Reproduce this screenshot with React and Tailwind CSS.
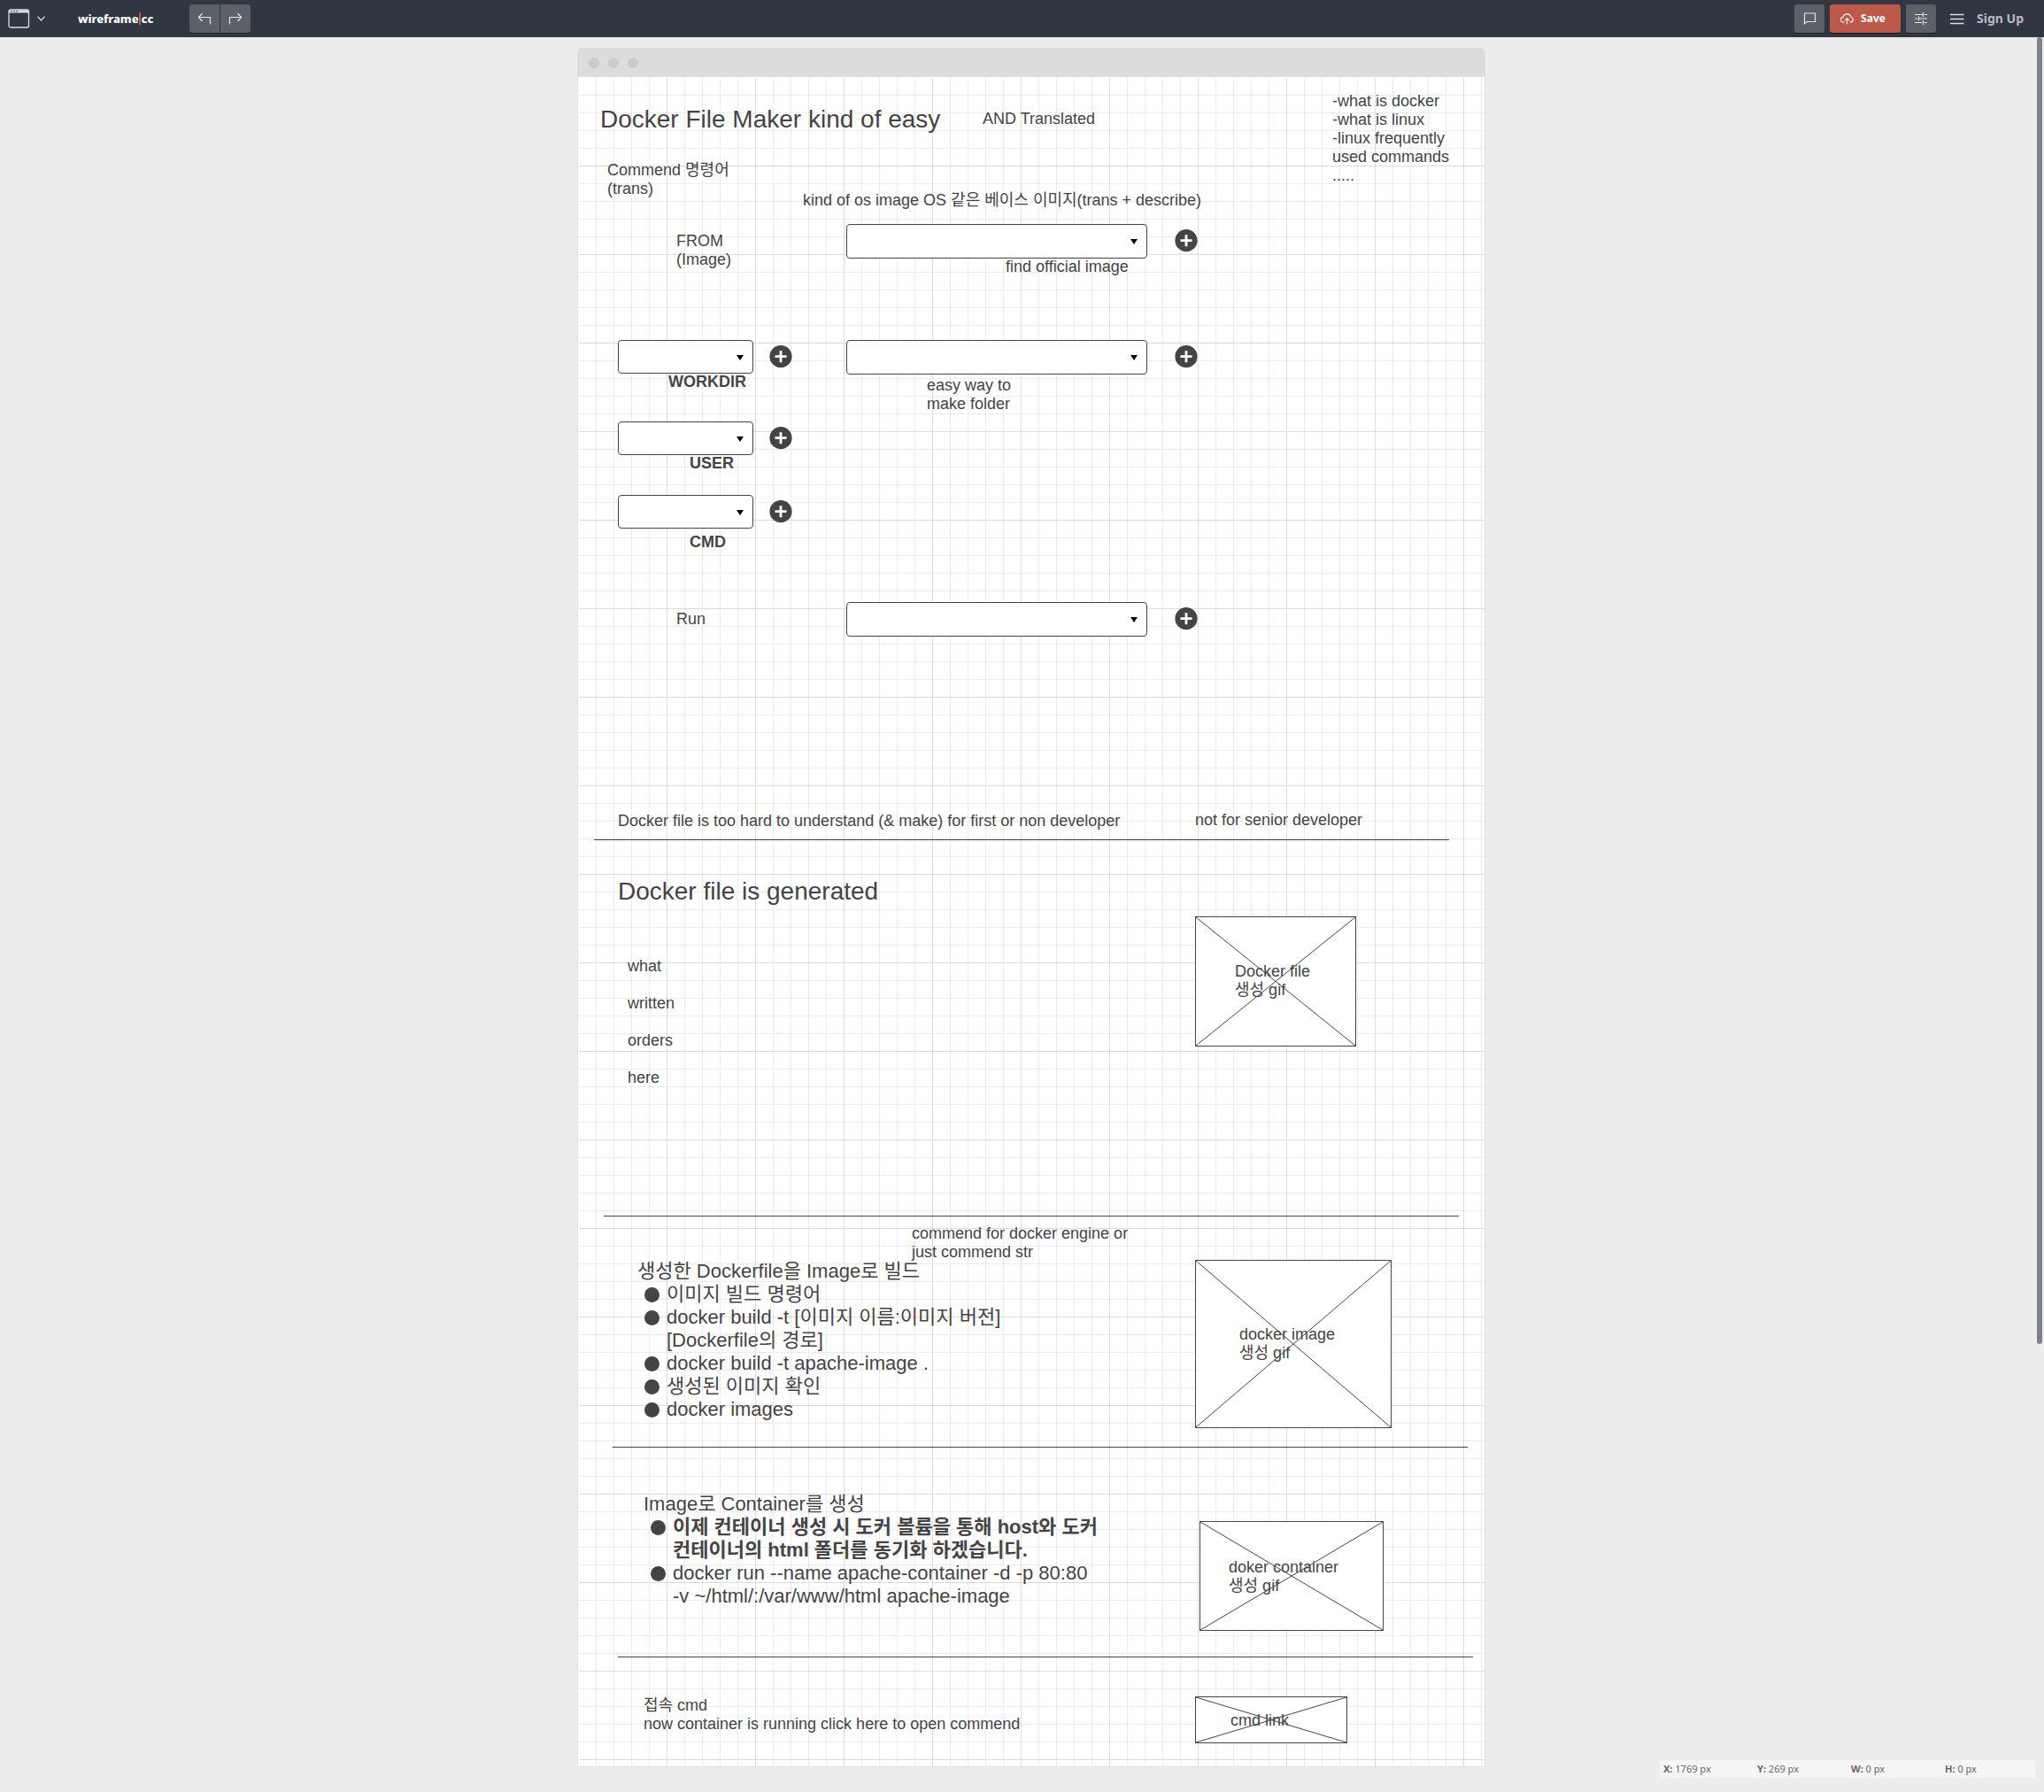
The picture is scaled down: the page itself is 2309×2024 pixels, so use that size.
import React from "react";

const FONT = "font-['Liberation_Sans','Noto_Sans_CJK_KR',sans-serif]";

const notes = [
  { at: "left-[458px] top-[37px]", lines: ["AND Translated"] },
  { at: "left-[34px] top-[95px]", lines: ["Commend 명령어", "(trans)"] },
  { at: "left-[255px] top-[129px]", lines: ["kind of os image OS 같은 베이스 이미지(trans + describe)"] },
  { at: "left-[853px] top-[17px]", lines: ["-what is docker", "-what is linux", "-linux frequently", "used commands", "....."] },
  { at: "left-[112px] top-[175px]", lines: ["FROM", "(Image)"] },
  { at: "left-[484px] top-[204px]", lines: ["find official image"] },
  { at: "left-[103px] top-[334px] font-bold", lines: ["WORKDIR"] },
  { at: "left-[395px] top-[338px]", lines: ["easy way to", "make folder"] },
  { at: "left-[127px] top-[426px] font-bold", lines: ["USER"] },
  { at: "left-[127px] top-[515px] font-bold", lines: ["CMD"] },
  { at: "left-[112px] top-[602px]", lines: ["Run"] },
  { at: "left-[46px] top-[830px]", lines: ["Docker file is too hard to understand (& make) for first or non developer"] },
  { at: "left-[698px] top-[829px]", lines: ["not for senior developer"] },
  { at: "left-[57px] top-[994px]", lines: ["what", "\u00a0", "written", "\u00a0", "orders", "\u00a0", "here"] },
  { at: "left-[378px] top-[1296px]", lines: ["commend for docker engine or", "just commend str"] },
  { at: "left-[75px] top-[1829px]", lines: ["접속 cmd", "now container is running click here to open commend"] },
];

const pictureNotes = [
  { at: "left-[743px] top-[1000px]", lines: ["Docker file", "생성 gif"] },
  { at: "left-[748px] top-[1410px]", lines: ["docker image", "생성 gif"] },
  { at: "left-[736px] top-[1673px]", lines: ["doker container", "생성 gif"] },
  { at: "left-[738px] top-[1846px]", lines: ["cmd link"] },
];

const titles = [
  { at: "left-[26px] top-[32px]", text: "Docker File Maker kind of easy" },
  { at: "left-[46px] top-[904px]", text: "Docker file is generated" },
];

const selects = [
  { at: "left-[304px] top-[166px] w-[340px] h-[39px]", label: "Base image" },
  { at: "left-[46px] top-[297px] w-[153px] h-[38px]", label: "WORKDIR" },
  { at: "left-[304px] top-[297px] w-[340px] h-[39px]", label: "WORKDIR folder" },
  { at: "left-[46px] top-[389px] w-[153px] h-[38px]", label: "USER" },
  { at: "left-[46px] top-[472px] w-[153px] h-[38px]", label: "CMD" },
  { at: "left-[304px] top-[593px] w-[340px] h-[39px]", label: "Run" },
];

const pluses = [
  { at: "left-[675px] top-[172px]", label: "Add image" },
  { at: "left-[217px] top-[303px]", label: "Add WORKDIR" },
  { at: "left-[675px] top-[303px]", label: "Add folder" },
  { at: "left-[217px] top-[395px]", label: "Add USER" },
  { at: "left-[217px] top-[478px]", label: "Add CMD" },
  { at: "left-[675px] top-[599px]", label: "Add run step" },
];

const rules = [
  "left-[19px] top-[861px]",
  "left-[30px] top-[1286px]",
  "left-[40px] top-[1547px]",
  "left-[46px] top-[1784px]",
];

const pictures = [
  "left-[698px] top-[948px] w-[182px] h-[147px]",
  "left-[698px] top-[1336px] w-[222px] h-[190px]",
  "left-[703px] top-[1631px] w-[208px] h-[124px]",
  "left-[698px] top-[1829px] w-[172px] h-[53px]",
];

const lists = [
  {
    at: "left-[68px] top-[1336px]",
    heading: "생성한 Dockerfile을 Image로 빌드",
    items: [
      { lines: ["이미지 빌드 명령어"] },
      { lines: ["docker build -t [이미지 이름:이미지 버전]", "[Dockerfile의 경로]"] },
      { lines: ["docker build -t apache-image ."] },
      { lines: ["생성된 이미지 확인"] },
      { lines: ["docker images"] },
    ],
  },
  {
    at: "left-[75px] top-[1599px]",
    heading: "Image로 Container를 생성",
    items: [
      { bold: true, lines: ["이제 컨테이너 생성 시 도커 볼륨을 통해 host와 도커", "컨테이너의 html 폴더를 동기화 하겠습니다."] },
      { lines: ["docker run --name apache-container -d -p 80:80", "-v ~/html/:/var/www/html apache-image"] },
    ],
  },
];

function Note({ at, lines }) {
  return (
    <p className={`absolute whitespace-nowrap text-[18px] leading-[21px] ${at}`}>
      {lines.map((line, i) => (
        <span key={i} className="block h-[21px]">{line}</span>
      ))}
    </p>
  );
}

function Dropdown({ at, label }) {
  return (
    <div className={`absolute ${at}`}>
      <select
        aria-label={label}
        className="block h-full w-full appearance-none rounded-[4px] border border-[#444] bg-white px-3 text-[18px]"
      />
      <svg className="pointer-events-none absolute right-[11px] top-[17px] h-[6px] w-[8px]" viewBox="0 0 8 6" aria-hidden="true">
        <path d="M0 0h8L4 6z" fill="#000" />
      </svg>
    </div>
  );
}

function Plus({ at, label }) {
  return (
    <button type="button" aria-label={label} className={`absolute h-[26px] w-[26px] ${at}`}>
      <svg viewBox="0 0 26 26" className="block h-full w-full">
        <circle cx="13" cy="12.7" r="12.6" fill="#444" />
        <path d="M13 6.2v13M6.5 12.7h13" stroke="#fff" strokeWidth="2.8" />
      </svg>
    </button>
  );
}

function Picture({ at }) {
  return (
    <div className={`absolute border border-[#444] bg-white ${at}`}>
      <svg className="block h-full w-full" aria-hidden="true">
        <line x1="0" y1="0" x2="100%" y2="100%" stroke="#444" />
        <line x1="100%" y1="0" x2="0" y2="100%" stroke="#444" />
      </svg>
    </div>
  );
}

function Outline({ at, heading, items }) {
  return (
    <div className={`absolute whitespace-nowrap text-[22px] leading-[26px] ${at}`}>
      <p className="h-[26px]">{heading}</p>
      <ul className="pl-2">
        {items.map((item, i) => (
          <li key={i} className="flex gap-2">
            <span className="mt-[5px] h-[17px] w-[17px] rounded-full bg-[#444]" />
            <div className={item.bold ? "font-bold" : ""}>
              {item.lines.map((line) => (
                <span key={line} className="block h-[26px]">{line}</span>
              ))}
            </div>
          </li>
        ))}
      </ul>
    </div>
  );
}

function TopBar() {
  const key = "flex h-8 items-center justify-center bg-[#5c6069] text-[#e4e5e7] shadow-[0_1px_0_#1c212a]";
  return (
    <header className="flex h-[42px] items-center justify-between bg-[#303642] font-['Noto_Sans','Open_Sans',sans-serif] font-bold">
      <div className="flex items-center">
        <button type="button" aria-label="Choose device" className="ml-[9px] flex items-center gap-2 text-[#dcdde0]">
          <svg width="25" height="22" viewBox="0 0 25 22" fill="none">
            <rect x="1" y="1" width="22.5" height="20" rx="2" stroke="currentColor" strokeWidth="1.3" />
            <path d="M1 1.5h22.5V4.5H1z" fill="currentColor" />
            <path d="M3.5 2.7h1.3M6.5 2.7h1.3M9.5 2.7h1.3" stroke="#303642" strokeWidth="1.3" />
          </svg>
          <svg width="9" height="6" viewBox="0 0 9 6" fill="none" stroke="currentColor" strokeWidth="1.2">
            <path d="M.5.7l4 4.3 4-4.3" />
          </svg>
        </button>
        <a href="#home" className="ml-[37px] flex items-center text-[13px] font-extrabold leading-[20px] text-white">
          wireframe<span className="h-[14px] w-[2px] bg-[#c9594c]" /><span className="ml-px">cc</span>
        </a>
        <div className="ml-[41px] flex gap-px">
          <button type="button" aria-label="Undo" className={`${key} w-[34px] rounded-l-[3px]`}>
            <svg width="16" height="15" viewBox="0 0 16 15" fill="none" stroke="currentColor" strokeWidth="1.2">
              <path d="M5.5 1L1.5 5.5l4 4.500M1.5 5.5H14.5V13.5" />
            </svg>
          </button>
          <button type="button" aria-label="Redo" className={`${key} w-[34px] rounded-r-[3px]`}>
            <svg width="16" height="15" viewBox="0 0 16 15" fill="none" stroke="currentColor" strokeWidth="1.2">
              <path d="M10.5 1l4 4.5-4 4.5M14.5 5.5H1.5V13.5" />
            </svg>
          </button>
        </div>
      </div>
      <div className="flex items-center pr-[23px]">
        <button type="button" aria-label="Comments" className={`${key} w-[34px] rounded-[3px]`}>
          <svg width="15" height="14" viewBox="0 0 15 14" fill="none" stroke="currentColor" strokeWidth="1.2">
            <path d="M1.5 1h12v9.5H4.5L1.5 12.8z" />
          </svg>
        </button>
        <button type="button" className="ml-[6px] flex h-8 w-20 items-center gap-2 rounded-[3px] bg-[#bd5948] pl-3 text-[12px] text-white shadow-[0_1px_0_#1c212a]">
          <svg width="15" height="14" viewBox="0 0 15 14" fill="none" stroke="currentColor" strokeWidth="1.1">
            <path d="M4.5 11H3.3A2.7 2.7 0 0 1 2.9 5.6 4.7 4.7 0 0 1 12 5.3a2.9 2.9 0 0 1-.3 5.7H10.5" />
            <path d="M7.5 13.5V7M5 9.2L7.5 6.7 10 9.2" />
          </svg>
          Save
        </button>
        <button type="button" aria-label="Settings" className={`${key} ml-[6px] w-[34px] rounded-[3px]`}>
          <svg width="14" height="16" viewBox="0 0 14 16" fill="none" stroke="currentColor" strokeWidth="1.2">
            <path d="M0 3.5h9M11 3.5h3M9.5 1v5M0 8h3M5 8h9M4.5 5.5v5M0 12.5h8M10.5 12.5H14M9.5 10v5" />
          </svg>
        </button>
        <button type="button" aria-label="Menu" className="ml-4 text-[#dcdde0]">
          <svg width="16" height="13" viewBox="0 0 16 13" stroke="currentColor" strokeWidth="1.3">
            <path d="M0 1.5h15.5M0 6.5h15.5M0 11.5h15.5" />
          </svg>
        </button>
        <a href="#signup" className="ml-[14px] text-[14px] leading-[20px] text-[#b9bbbf]">Sign Up</a>
      </div>
    </header>
  );
}

export default function App() {
  return (
    <div className={`relative min-h-screen bg-[#ededed] text-[#444] ${FONT}`}>
      <TopBar />
      <div className="h-px bg-[#dfe2e6]" />
      <main className="flex justify-center pb-7 pl-[21px] pt-[11px]">
        <section aria-label="Wireframe" className="w-[1026px]">
          <div className="flex h-[33px] items-center gap-[10px] rounded-t-[6px] bg-[#dcdcdc] pl-[13px]">
            <span className="h-3 w-3 rounded-full bg-[#cbcbcb]" />
            <span className="h-3 w-3 rounded-full bg-[#cbcbcb]" />
            <span className="h-3 w-3 rounded-full bg-[#cbcbcb]" />
          </div>
          <div className="relative bg-white">
            <div className="border-x border-b border-[#e0e0e0] pl-px pt-px">
              <div className="h-[1907px] bg-[linear-gradient(to_left,#dcdcdc_1px,transparent_1px),linear-gradient(to_top,#dcdcdc_1px,transparent_1px),linear-gradient(to_left,#ececec_1px,transparent_1px),linear-gradient(to_top,#ececec_1px,transparent_1px)] bg-[size:100px_100px,100px_100px,20px_20px,20px_20px]" />
            </div>
            {titles.map((t) => (
              <h2 key={t.text} className={`absolute whitespace-nowrap text-[28px] leading-[32px] ${t.at}`}>{t.text}</h2>
            ))}
            {pictures.map((at) => <Picture key={at} at={at} />)}
            {rules.map((at) => <hr key={at} className={`absolute w-[966px] border-t border-[#444] ${at}`} />)}
            {selects.map((s) => <Dropdown key={s.at} {...s} />)}
            {pluses.map((p) => <Plus key={p.at} {...p} />)}
            {notes.map((n) => <Note key={n.at} {...n} />)}
            {pictureNotes.map((n) => <Note key={n.at} {...n} />)}
            {lists.map((l) => <Outline key={l.at} {...l} />)}
          </div>
        </section>
      </main>
      <div className="absolute right-[2px] top-[42px] h-[1476px] w-[6px] rounded-full bg-[#7f8288]" />
      <footer className="fixed bottom-4 right-[10px] grid h-5 w-[424px] grid-cols-4 items-center bg-[#f5f5f5] font-['Noto_Sans','Open_Sans',sans-serif] text-[11px] text-[#666]">
        <span className="pl-1"><b>X:</b> 1769 px</span>
        <span className="pl-1"><b>Y:</b> 269 px</span>
        <span className="pl-1"><b>W:</b> 0 px</span>
        <span className="pl-1"><b>H:</b> 0 px</span>
      </footer>
    </div>
  );
}
